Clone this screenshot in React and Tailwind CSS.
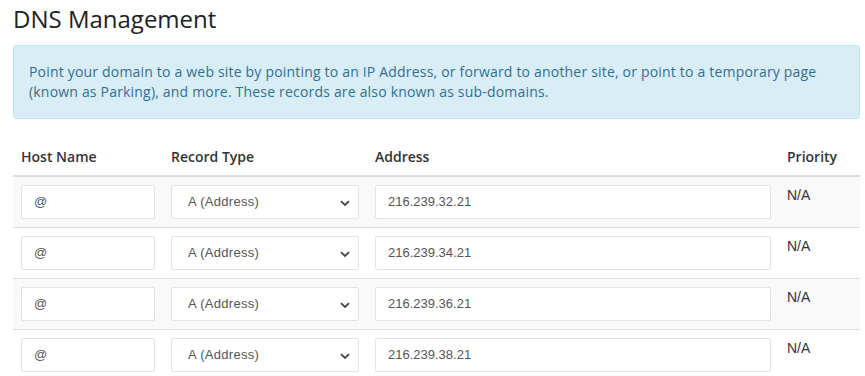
import React from "react";

const rows = ["216.239.32.21", "216.239.34.21", "216.239.36.21", "216.239.38.21"];

function Chevron() {
  return (
    <svg width="10" height="7" viewBox="0 0 10 7" className="absolute right-[8px] top-[14px]">
      <path d="M1 1.2 L5 5 L9 1.2" fill="none" stroke="#444" strokeWidth="1.8" />
    </svg>
  );
}

export default function App() {
  return (
    <div className="w-[865px] h-[376px] overflow-hidden bg-white pl-[13px] pr-[5px] font-['Open_Sans',sans-serif]">
      <h1 className="text-[24px] leading-[30px] pt-[4px] text-[#222] font-normal">DNS Management</h1>
      <div className="mt-[11px] border border-[#bce8f1] bg-[#d9edf7] rounded-[3px] px-[15px] pt-[16px] pb-[16px] text-[14px] leading-[20px] tracking-[0.19px] text-[#31708f]">
        Point your domain to a web site by pointing to an IP Address, or forward to another site, or point to a temporary page (known as Parking), and more. These records are also known as sub-domains.
      </div>
      <table className="mt-[20px] w-[847px] border-collapse">
        <thead>
          <tr className="border-b-2 border-[#ddd]">
            <th className="w-[150px] text-left px-[8px] py-[8px] text-[14px] leading-[20px] font-semibold text-[#333]">Host Name</th>
            <th className="w-[204px] text-left px-[8px] py-[8px] text-[14px] leading-[20px] font-semibold text-[#333]">Record Type</th>
            <th className="w-[412px] text-left px-[8px] py-[8px] text-[14px] leading-[20px] font-semibold text-[#333]">Address</th>
            <th className="text-left px-[8px] py-[8px] text-[14px] leading-[20px] font-semibold text-[#333]">Priority</th>
          </tr>
        </thead>
        <tbody>
          {rows.map((ip, i) => (
            <tr key={ip} className={`border-t border-[#ddd] first:border-t-0 ${i % 2 === 0 ? "bg-[#f9f9f9]" : "bg-white"}`}>
              <td className="p-[8px] align-top">
                <div className="h-[34px] w-[134px] bg-white border border-[#e3e3e3] rounded-[2px] pl-[12px] flex items-center text-[13px] text-[#555] font-['Liberation_Sans',sans-serif]">@</div>
              </td>
              <td className="p-[8px] align-top">
                <div className="relative h-[34px] w-[188px] bg-white border border-[#e3e3e3] rounded-[2px] pl-[16px] flex items-center text-[13px] tracking-[0.3px] text-[#555] font-['Liberation_Sans',sans-serif]">
                  A (Address)
                  <Chevron />
                </div>
              </td>
              <td className="p-[8px] align-top">
                <div className="h-[34px] w-[396px] bg-white border border-[#e3e3e3] rounded-[2px] pl-[12px] flex items-center text-[13px] text-[#555] font-['Liberation_Sans',sans-serif]">{ip}</div>
              </td>
              <td className="p-[8px] align-top text-[14px] leading-[20px] text-[#333] font-['Liberation_Sans',sans-serif]">
                <div>N/A</div>
              </td>
            </tr>
          ))}
        </tbody>
      </table>
    </div>
  );
}
